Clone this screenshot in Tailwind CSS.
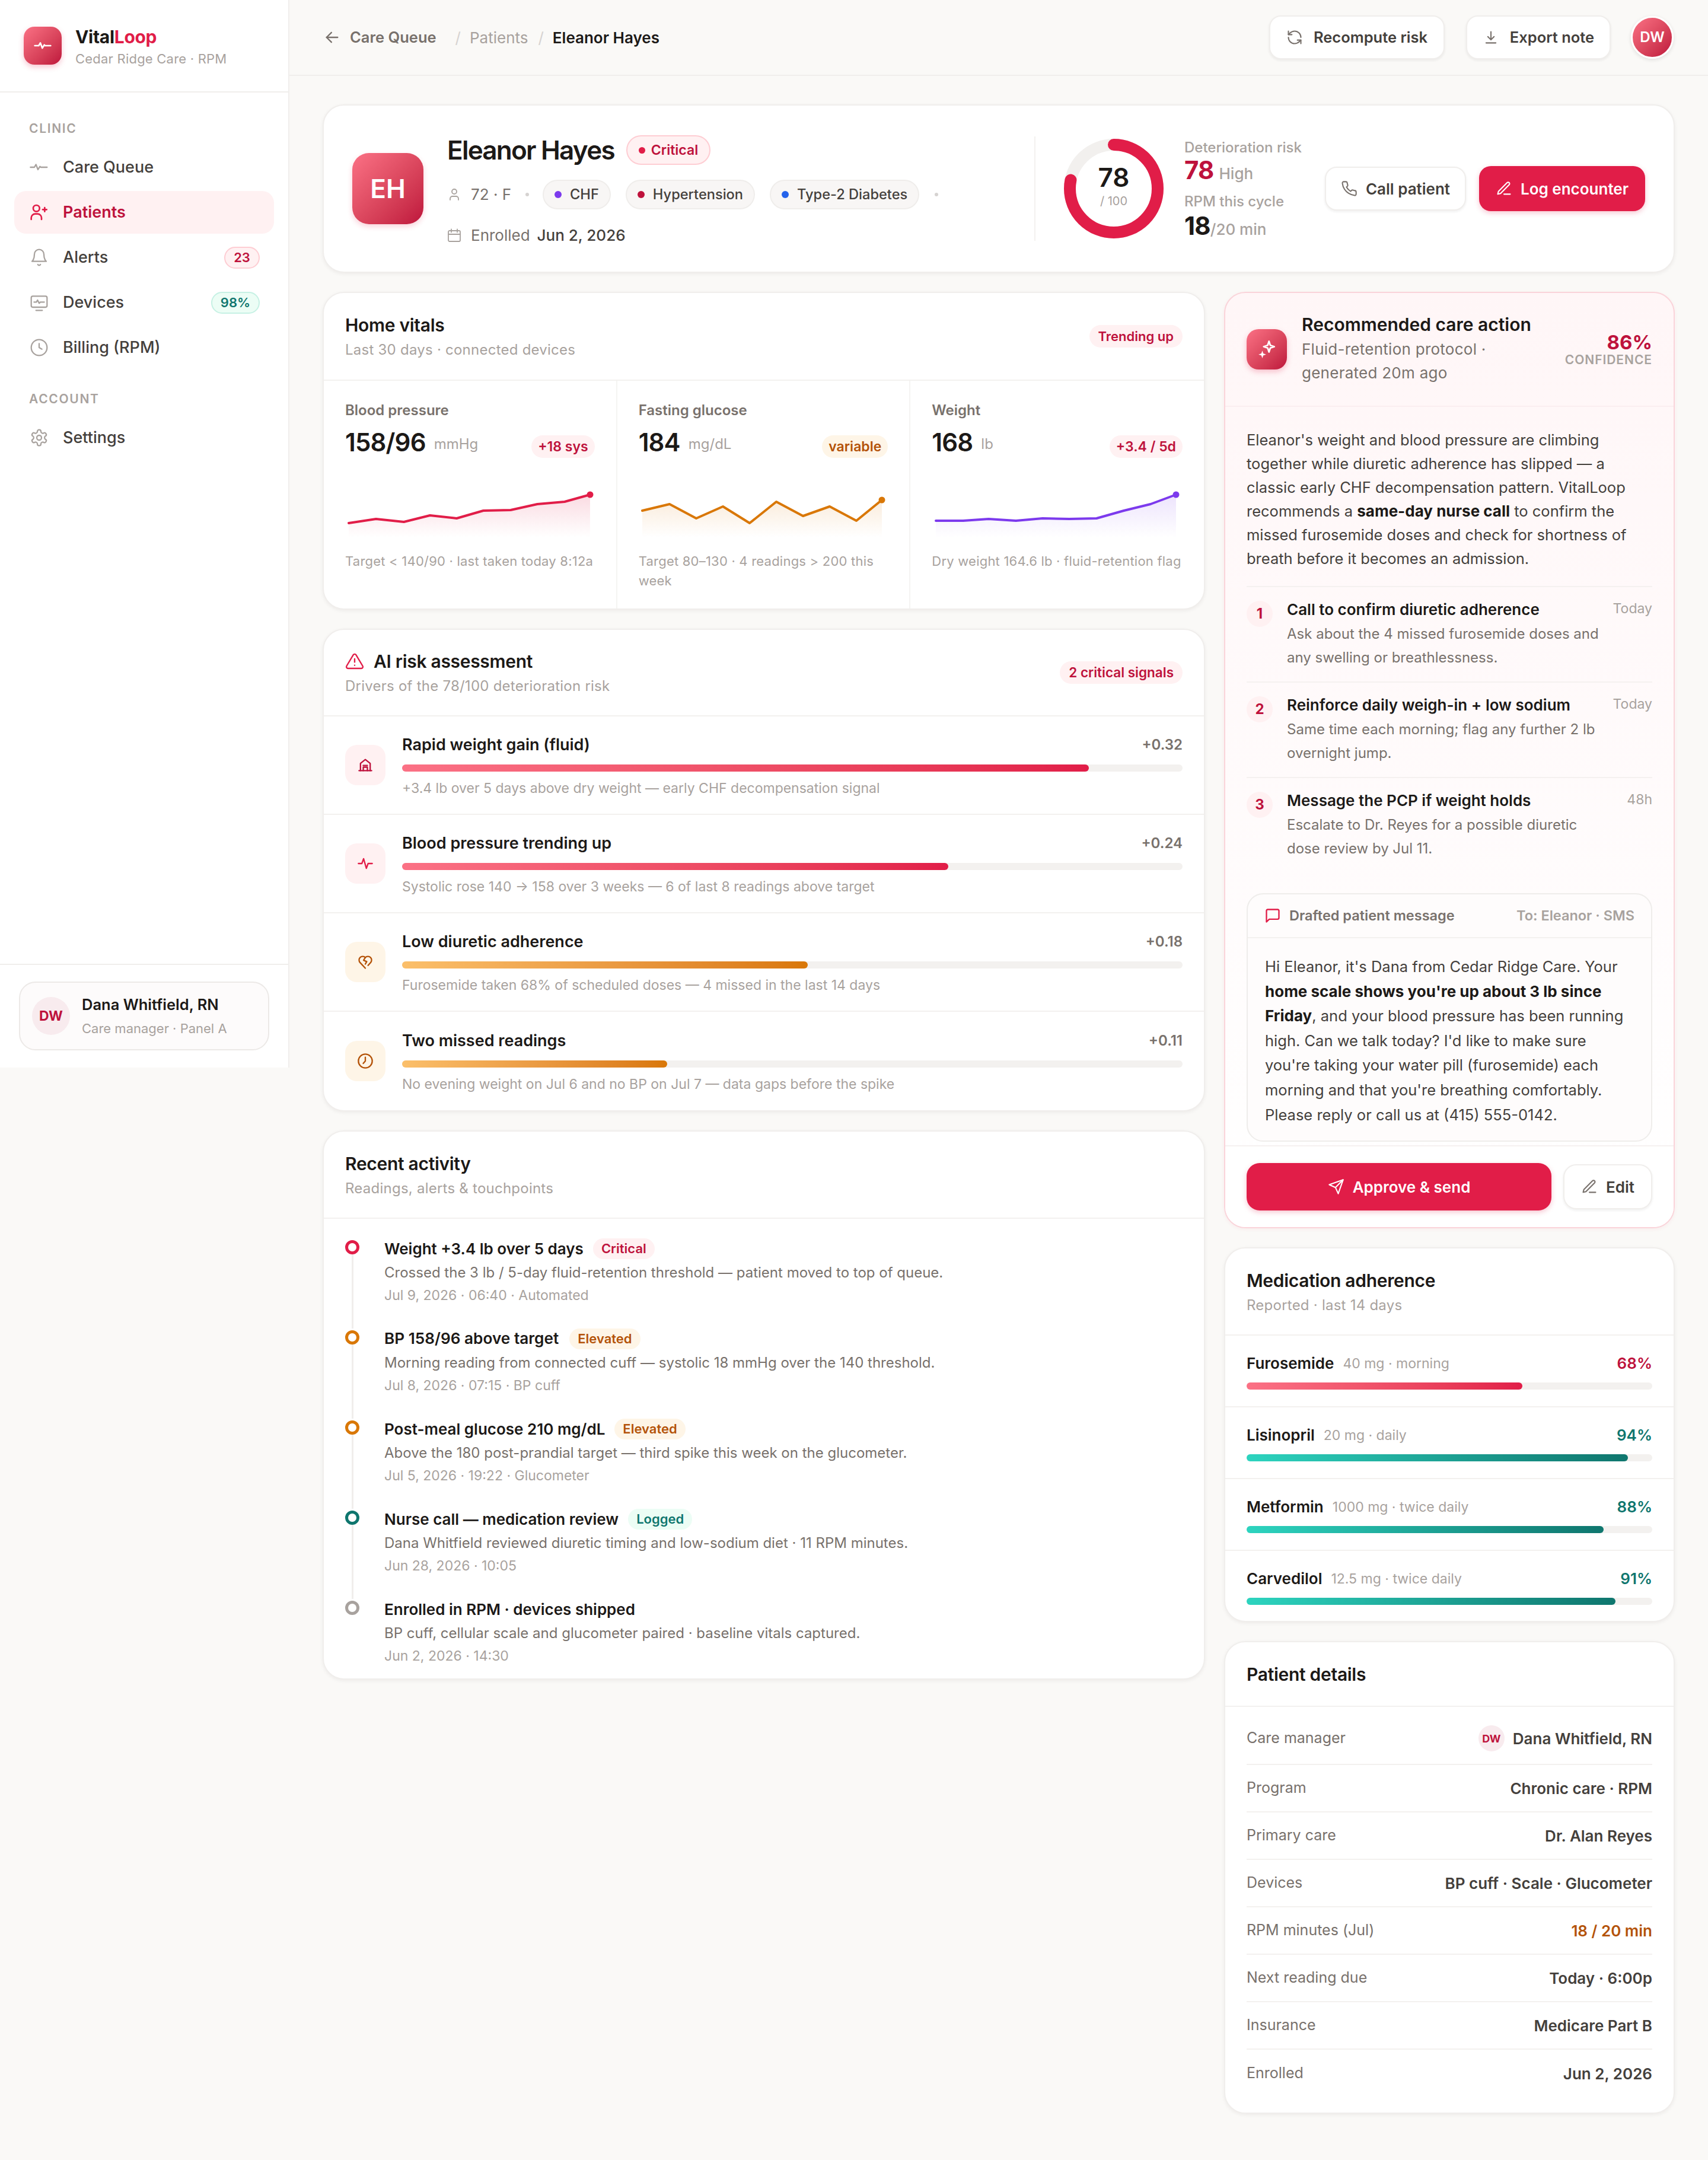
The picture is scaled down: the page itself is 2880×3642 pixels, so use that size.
<!DOCTYPE html>
<html lang="en">
<head>
    <meta charset="UTF-8">
    <title>VitalLoop - Eleanor Hayes</title>
    <script src="https://cdn.jsdelivr.net/npm/@tailwindcss/browser@4"></script>
</head>
<body class="bg-[#faf9f7] text-[#1c1917] [font-family:Inter,sans-serif]">
<div class="flex min-h-[3642px]">

    <!-- sidebar -->
    <aside class="w-[488px] h-[1800px] shrink-0 bg-white border-r-2 border-[#f0eeec] flex flex-col">
        <div class="h-[156px] shrink-0 border-b-2 border-[#f0eeec] px-10 flex items-center gap-[23px]">
            <div class="w-16 h-16 rounded-[18px] bg-linear-to-br from-[#fb7185] to-[#be123c] flex items-center justify-center shadow-[0_4px_10px_rgba(225,29,72,.25)]">
                <svg class="w-8 h-8" viewBox="0 0 24 24" fill="none" stroke="white" stroke-width="2" stroke-linecap="round" stroke-linejoin="round"><path d="M2 12h5l2-3.500 2.500 6.500 2.500-4 1 1h7"/></svg>
            </div>
            <div class="pt-[4px]">
                <div class="text-[30px] leading-[36px] font-bold tracking-[-0.01em]">Vital<span class="text-[#e11d48]">Loop</span></div>
                <div class="text-[22px] leading-[30px] mt-[4px] text-[#a8a29e] tracking-[0.01em]">Cedar Ridge Care · RPM</div>
            </div>
        </div>
        <nav class="flex-1 px-6 pt-[47px]">
            <div class="pl-[25px] text-[21px] leading-7 font-semibold tracking-[0.08em] text-[#a8a29e] mb-[15px]">CLINIC</div>
            <div class="h-[72px] mb-1 pl-[26px] pr-6 flex items-center gap-6 text-[27px] font-medium text-[#44403c]">
                <svg class="w-8 h-8 text-[#a8a29e]" viewBox="0 0 24 24" fill="none" stroke="currentColor" stroke-width="1.700" stroke-linecap="round" stroke-linejoin="round"><path d="M1 12h5l2-3.500 2.500 6.500 2.500-4 1 1h8"/></svg>
                Care Queue
            </div>
            <div class="h-[72px] mb-1 pl-[26px] pr-6 flex items-center gap-6 text-[27px] font-semibold text-[#be123c] bg-[#fff1f2] rounded-[20px]">
                <svg class="w-8 h-8 text-[#e11d48]" viewBox="0 0 24 24" fill="none" stroke="currentColor" stroke-width="2" stroke-linecap="round" stroke-linejoin="round"><path d="M2 21v-2a5 5 0 0 1 5-5h3a5 5 0 0 1 5 5v2"/><circle cx="8.500" cy="7" r="4"/><path d="M19 6v5"/><path d="M16.500 8.500h5"/></svg>
                Patients
            </div>
            <div class="h-[72px] mb-1 pl-[26px] pr-6 flex items-center gap-6 text-[27px] font-medium text-[#44403c]">
                <svg class="w-8 h-8 text-[#a8a29e]" viewBox="0 0 24 24" fill="none" stroke="currentColor" stroke-width="1.700" stroke-linecap="round" stroke-linejoin="round"><path d="M6 8a6 6 0 0 1 12 0c0 7 3 9 3 9H3s3-2 3-9"/><path d="M10.300 21a1.940 1.940 0 0 0 3.400 0"/></svg>
                Alerts
                <span class="ml-auto h-[37px] w-[60px] flex items-center justify-center rounded-full bg-[#fff1f2] border-2 border-[#fecdd3] text-[22px] font-semibold text-[#be123c]">23</span>
            </div>
            <div class="h-[72px] mb-1 pl-[26px] pr-6 flex items-center gap-6 text-[27px] font-medium text-[#44403c]">
                <svg class="w-8 h-8 text-[#a8a29e]" viewBox="0 0 24 24" fill="none" stroke="currentColor" stroke-width="1.700" stroke-linecap="round" stroke-linejoin="round"><rect x="2" y="4" width="20" height="14" rx="2"/><path d="M8 22h8"/><path d="M5.500 11.500h3l1.500-2.500 2 4 1.500-1.500h5"/></svg>
                Devices
                <span class="ml-auto h-[37px] w-[82px] flex items-center justify-center rounded-full bg-[#ecfdf5] border-2 border-[#c6f1e4] text-[22px] font-semibold text-[#0f766e]">98%</span>
            </div>
            <div class="h-[72px] mb-[37px] pl-[26px] pr-6 flex items-center gap-6 text-[27px] font-medium text-[#44403c]">
                <svg class="w-8 h-8 text-[#a8a29e]" viewBox="0 0 24 24" fill="none" stroke="currentColor" stroke-width="1.700" stroke-linecap="round" stroke-linejoin="round"><circle cx="12" cy="12" r="10"/><path d="M12 7v5l3.500 2"/></svg>
                Billing (RPM)
            </div>
            <div class="pl-[25px] text-[21px] leading-7 font-semibold tracking-[0.08em] text-[#a8a29e] mb-[15px]">ACCOUNT</div>
            <div class="h-[72px] pl-[26px] pr-6 flex items-center gap-6 text-[27px] font-medium text-[#44403c]">
                <svg class="w-8 h-8 text-[#a8a29e]" viewBox="0 0 24 24" fill="none" stroke="currentColor" stroke-width="1.700" stroke-linecap="round" stroke-linejoin="round"><path d="M12.220 2h-.44a2 2 0 0 0-2 2v.18a2 2 0 0 1-1 1.730l-.43.25a2 2 0 0 1-2 0l-.15-.08a2 2 0 0 0-2.730.73l-.22.38a2 2 0 0 0 .73 2.730l.15.1a2 2 0 0 1 1 1.720v.51a2 2 0 0 1-1 1.740l-.15.09a2 2 0 0 0-.73 2.730l.22.38a2 2 0 0 0 2.730.73l.15-.08a2 2 0 0 1 2 0l.43.25a2 2 0 0 1 1 1.730V20a2 2 0 0 0 2 2h.44a2 2 0 0 0 2-2v-.18a2 2 0 0 1 1-1.730l.43-.25a2 2 0 0 1 2 0l.15.08a2 2 0 0 0 2.730-.73l.22-.39a2 2 0 0 0-.73-2.730l-.15-.08a2 2 0 0 1-1-1.740v-.5a2 2 0 0 1 1-1.740l.15-.09a2 2 0 0 0 .73-2.730l-.22-.38a2 2 0 0 0-2.730-.73l-.15.08a2 2 0 0 1-2 0l-.43-.25a2 2 0 0 1-1-1.730V4a2 2 0 0 0-2-2z"/><circle cx="12" cy="12" r="3"/></svg>
                Settings
            </div>
        </nav>
        <div class="border-t-2 border-[#f0eeec] px-8 pt-[28px] pb-[29px]">
            <div class="h-[116px] rounded-[28px] border-2 border-[#ece9e7] bg-[#fdfbfb] pl-5 flex items-center gap-[20px]">
                <div class="w-16 h-16 rounded-full bg-[#f8ebee] flex items-center justify-center text-[23px] font-bold text-[#be123c]">DW</div>
                <div>
                    <div class="text-[25.500px] leading-[36px] font-semibold">Dana Whitfield, RN</div>
                    <div class="text-[22px] leading-[32px] mt-[6px] text-[#a8a29e]">Care manager · Panel A</div>
                </div>
            </div>
        </div>
    </aside>

    <div class="flex-1 min-w-0">
        <!-- top bar -->
        <header class="h-[128px] border-b-2 border-[#f0eeec] pl-[58px] pr-14 flex items-center">
            <svg class="w-7 h-7 text-[#78716c] mr-4" viewBox="0 0 24 24" fill="none" stroke="currentColor" stroke-width="2" stroke-linecap="round" stroke-linejoin="round"><path d="M20 12H4"/><path d="M11 5l-7 7 7 7"/></svg>
            <span class="text-[25.500px] font-semibold text-[#78716c]">Care Queue</span>
            <span class="text-[26px] text-[#d6d3d1] ml-8 mr-[15px]">/</span>
            <span class="text-[26px] text-[#a8a29e]">Patients</span>
            <span class="text-[26px] text-[#d6d3d1] ml-[17px] mr-[15px]">/</span>
            <span class="text-[26px] font-semibold">Eleanor Hayes</span>
            <button class="ml-auto w-[296px] h-[74px] rounded-[20px] bg-white border-2 border-[#f0eeec] shadow-[0_2px_4px_rgba(28,25,23,.07)] flex items-center justify-center gap-[18px] text-[25.500px] font-semibold text-[#44403c]">
                <svg class="w-7 h-7 text-[#78716c]" viewBox="0 0 24 24" fill="none" stroke="currentColor" stroke-width="1.800" stroke-linecap="round" stroke-linejoin="round"><path d="M21 12a9 9 0 0 0-9-9 9.750 9.750 0 0 0-6.740 2.740L3 8"/><path d="M3 3v5h5"/><path d="M3 12a9 9 0 0 0 9 9 9.750 9.750 0 0 0 6.740-2.740L21 16"/><path d="M16 16h5v5"/></svg>
                Recompute risk
            </button>
            <button class="ml-9 w-[244px] h-[74px] rounded-[20px] bg-white border-2 border-[#f0eeec] shadow-[0_2px_4px_rgba(28,25,23,.07)] flex items-center justify-center gap-[18px] text-[25.500px] font-semibold text-[#44403c]">
                <svg class="w-7 h-7 text-[#78716c]" viewBox="0 0 24 24" fill="none" stroke="currentColor" stroke-width="1.800" stroke-linecap="round" stroke-linejoin="round"><path d="M12 4v11"/><path d="M7.500 11l4.500 4.500 4.500-4.500"/><path d="M5 20h14"/></svg>
                Export note
            </button>
            <div class="ml-[34px] mr-[2px] w-[72px] h-[72px] rounded-full border-[3px] border-white shadow-[0_2px_6px_rgba(28,25,23,.12)] bg-linear-to-br from-[#fb7185] to-[#be123c] flex items-center justify-center text-[24px] font-semibold text-white">DW</div>
        </header>

        <main class="px-14 pt-12">
            <!-- patient hero -->
            <section class="h-[284px] bg-white border-2 border-[#f0eeec] rounded-[36px] shadow-[0_2px_6px_rgba(28,25,23,.06)] pl-[48px] pr-[48px] flex items-center">
                <div class="w-[120px] h-[120px] shrink-0 rounded-[28px] bg-linear-to-br from-[#fb7185] to-[#be123c] flex items-center justify-center text-[44px] font-semibold text-white shadow-[0_4px_10px_rgba(225,29,72,.2)] mr-[40px]">EH</div>
                <div class="flex-1 min-w-0 pt-[2px]">
                    <div class="h-[52px] flex items-center gap-5">
                        <h1 class="text-[44px] leading-[52px] font-semibold tracking-[-0.04em]">Eleanor Hayes</h1>
                        <span class="h-[50px] px-[19px] rounded-full bg-[#fff1f2] border-2 border-[#fecdd3] flex items-center gap-[10px] text-[23px] font-semibold text-[#be123c]"><i class="w-[11px] h-[11px] rounded-full bg-[#e11d48]"></i>Critical</span>
                    </div>
                    <div class="h-[50px] mt-6 flex items-center text-[26px] leading-8 text-[#78716c]">
                        <svg class="w-6 h-7 text-[#a8a29e] mr-[16px]" viewBox="0 0 24 24" fill="none" stroke="currentColor" stroke-width="1.800" stroke-linecap="round" stroke-linejoin="round"><path d="M19 21v-2a4 4 0 0 0-4-4H9a4 4 0 0 0-4 4v2"/><circle cx="12" cy="7" r="4"/></svg>
                        72 · F
                        <i class="w-[6px] h-[6px] rounded-full bg-[#d6d3d1] ml-[24px] mr-[23px]"></i>
                        <span class="h-[50px] px-[18px] rounded-full bg-[#f8f6f5] border-2 border-[#efedeb] flex items-center gap-[14px] text-[23.600px] leading-8 font-medium text-[#44403c]"><i class="w-[12px] h-[12px] rounded-full bg-[#7c3aed]"></i>CHF</span>
                        <span class="h-[50px] ml-[25px] px-[18px] rounded-full bg-[#f8f6f5] border-2 border-[#efedeb] flex items-center gap-[14px] text-[23.600px] leading-8 font-medium text-[#44403c]"><i class="w-[12px] h-[12px] rounded-full bg-[#be123c]"></i>Hypertension</span>
                        <span class="h-[50px] ml-[25px] px-[18px] rounded-full bg-[#f8f6f5] border-2 border-[#efedeb] flex items-center gap-[14px] text-[23.600px] leading-8 font-medium text-[#44403c]"><i class="w-[12px] h-[12px] rounded-full bg-[#2563eb]"></i>Type-2 Diabetes</span>
                        <i class="w-[6px] h-[6px] rounded-full bg-[#d6d3d1] ml-[26px]"></i>
                    </div>
                    <div class="h-7 mt-[30px] flex items-center text-[26px] leading-7 text-[#78716c]">
                        <svg class="w-6 h-7 text-[#a8a29e] mr-[16px]" viewBox="0 0 24 24" fill="none" stroke="currentColor" stroke-width="1.800" stroke-linecap="round" stroke-linejoin="round"><rect x="2" y="4" width="20" height="18" rx="2"/><path d="M7 1.500v5"/><path d="M17 1.500v5"/><path d="M2 10h20"/></svg>
                        Enrolled <span class="ml-3 font-medium text-[#44403c]">Jun 2, 2026</span>
                    </div>
                </div>
                <div class="w-[2px] h-[176px] bg-[#f3f1ef] mr-12"></div>
                <div class="relative w-[168px] h-[168px] mr-[35px]">
                    <svg class="w-full h-full -rotate-90" viewBox="0 0 168 168" fill="none" stroke-width="20"><circle cx="84" cy="84" r="74" stroke="#f2f0ee"/><circle cx="84" cy="84" r="74" stroke="#e11d48" stroke-linecap="round" stroke-dasharray="362.700 465"/></svg>
                    <div class="absolute inset-0 flex flex-col items-center justify-center -mt-[10px]">
                        <div class="text-[44px] leading-[50px] font-semibold">78</div>
                        <div class="text-[20px] leading-[26px] text-[#a8a29e] mt-[2px]">/ 100</div>
                    </div>
                </div>
                <div class="w-[237px] mt-[2px]">
                    <div class="text-[24px] leading-[30px] font-medium text-[#a8a29e]">Deterioration risk</div>
                    <div class="h-[46px] flex items-baseline gap-[9px]"><span class="text-[42px] leading-[46px] font-bold tracking-[-0.02em] text-[#be123c]">78</span><span class="text-[26px] font-medium text-[#a8a29e]">High</span></div>
                    <div class="text-[24px] leading-[30px] mt-[15px] font-medium text-[#a8a29e]">RPM this cycle</div>
                    <div class="h-[46px] mt-[3px] flex items-baseline"><span class="text-[42px] leading-[46px] font-bold tracking-[-0.02em]">18</span><span class="text-[26px] font-medium text-[#a8a29e]">/20 min</span></div>
                </div>
                <button class="w-[238px] h-[74px] rounded-[20px] bg-white border-2 border-[#f0eeec] shadow-[0_2px_4px_rgba(28,25,23,.07)] flex items-center justify-center gap-[14px] text-[26px] font-semibold text-[#44403c]">
                    <svg class="w-7 h-7 text-[#78716c]" viewBox="0 0 24 24" fill="none" stroke="currentColor" stroke-width="1.800" stroke-linecap="round" stroke-linejoin="round"><path d="M22 16.920v3a2 2 0 0 1-2.180 2 19.790 19.790 0 0 1-8.630-3.070 19.500 19.500 0 0 1-6-6 19.790 19.790 0 0 1-3.070-8.670A2 2 0 0 1 4.110 2h3a2 2 0 0 1 2 1.720 12.840 12.840 0 0 0 .7 2.810 2 2 0 0 1-.45 2.110L8.090 9.910a16 16 0 0 0 6 6l1.270-1.270a2 2 0 0 1 2.110-.45 12.840 12.840 0 0 0 2.810.7A2 2 0 0 1 22 16.920z"/></svg>
                    Call patient
                </button>
                <button class="ml-[22px] w-[280px] h-[76px] rounded-[20px] bg-[#e11d48] shadow-[0_3px_8px_rgba(225,29,72,.25)] flex items-center justify-center gap-[14px] text-[26px] font-semibold text-white">
                    <svg class="w-7 h-7" viewBox="0 0 24 24" fill="none" stroke="currentColor" stroke-width="1.800" stroke-linecap="round" stroke-linejoin="round"><path d="M12 20h9"/><path d="M16.500 3.500a2.121 2.121 0 0 1 3 3L7 19l-4 1 1-4L16.500 3.500z"/></svg>
                    Log encounter
                </button>
            </section>

            <div class="mt-8 grid grid-cols-[1fr_760px] gap-8 items-start">
                <!-- left column -->
                <div class="flex flex-col gap-8 min-w-0">
                    <section class="bg-white border-2 border-[#f0eeec] rounded-[36px] shadow-[0_2px_6px_rgba(28,25,23,.06)] overflow-hidden">
                        <div class="h-[148px] border-b-2 border-[#f3f1ef] px-9 flex items-center justify-between">
                            <div>
                                <h2 class="text-[30px] leading-[40px] font-semibold tracking-[-0.01em]">Home vitals</h2>
                                <p class="text-[24px] leading-[32px] mt-[6px] text-[#a8a29e] tracking-[0.01em]">Last 30 days · connected devices</p>
                            </div>
                            <span class="h-[38px] px-[15px] rounded-full bg-[#fff1f2] flex items-center text-[22px] font-semibold text-[#be123c]">Trending up</span>
                        </div>
                        <div class="grid grid-cols-3 h-[384px]">
                            <div class="border-r-2 border-[#f5f4f2] px-9 pt-9">
                                <div class="text-[24px] leading-7 font-semibold text-[#78716c]">Blood pressure</div>
                                <div class="mt-[14px] h-[52px] flex items-center">
                                    <span class="text-[42px] leading-[52px] font-semibold tracking-[-0.02em]">158/96</span>
                                    <span class="ml-[14px] mt-[6px] text-[24px] leading-8 text-[#a8a29e]">mmHg</span>
                                    <span class="ml-auto h-[38px] px-[11px] mt-[14px] rounded-full bg-[#fff1f2] flex items-center text-[23px] leading-8 font-semibold text-[#be123c]">+18 sys</span>
                                </div>
                                <svg class="block w-[421px] h-[84px] mt-[54px]" viewBox="0 0 421 84" fill="none"><defs><linearGradient id="g1" x1="0" y1="0" x2="0" y2="1"><stop offset="0" stop-color="#e11d48" stop-opacity=".16"/><stop offset="1" stop-color="#e11d48" stop-opacity="0"/></linearGradient></defs><path d="M6 56L52 49 99 54 143 43 188 48 233 35 279 34 324 24 370 20 413 8V80H6Z" fill="url(#g1)"/><path d="M6 56L52 49 99 54 143 43 188 48 233 35 279 34 324 24 370 20 413 8" stroke="#e11d48" stroke-width="4" stroke-linecap="round" stroke-linejoin="round"/><circle cx="413" cy="8" r="5.500" fill="#e11d48"/></svg>
                                <p class="mt-5 text-[22px] leading-[33px] text-[#a8a29e] tracking-[0.01em]">Target &lt; 140/90 · last taken today 8:12a</p>
                            </div>
                            <div class="border-r-2 border-[#f5f4f2] px-9 pt-9">
                                <div class="text-[24px] leading-7 font-semibold text-[#78716c]">Fasting glucose</div>
                                <div class="mt-[14px] h-[52px] flex items-center">
                                    <span class="text-[42px] leading-[52px] font-semibold tracking-[-0.02em]">184</span>
                                    <span class="ml-[14px] mt-[6px] text-[24px] leading-8 text-[#a8a29e]">mg/dL</span>
                                    <span class="ml-auto h-[38px] px-[11px] mt-[14px] rounded-full bg-[#fef5e7] flex items-center text-[23px] leading-8 font-semibold text-[#b45309]">variable</span>
                                </div>
                                <svg class="block w-[421px] h-[84px] mt-[54px]" viewBox="0 0 421 84" fill="none"><defs><linearGradient id="g2" x1="0" y1="0" x2="0" y2="1"><stop offset="0" stop-color="#d97706" stop-opacity=".14"/><stop offset="1" stop-color="#d97706" stop-opacity="0"/></linearGradient></defs><path d="M6 35L52 24 97 48 142 28 187 56 232 20 277 44 322 28 367 52 410 17V80H6Z" fill="url(#g2)"/><path d="M6 35L52 24 97 48 142 28 187 56 232 20 277 44 322 28 367 52 410 17" stroke="#d97706" stroke-width="4" stroke-linecap="round" stroke-linejoin="round"/><circle cx="410" cy="17" r="5.500" fill="#d97706"/></svg>
                                <p class="mt-5 text-[22px] leading-[33px] text-[#a8a29e] tracking-[0.01em]">Target 80–130 · 4 readings &gt; 200 this week</p>
                            </div>
                            <div class="px-9 pt-9">
                                <div class="text-[24px] leading-7 font-semibold text-[#78716c]">Weight</div>
                                <div class="mt-[14px] h-[52px] flex items-center">
                                    <span class="text-[42px] leading-[52px] font-semibold tracking-[-0.02em]">168</span>
                                    <span class="ml-[14px] mt-[6px] text-[24px] leading-8 text-[#a8a29e]">lb</span>
                                    <span class="ml-auto h-[38px] px-[11px] mt-[14px] rounded-full bg-[#fff1f2] flex items-center text-[23px] leading-8 font-semibold text-[#be123c]">+3.4 / 5d</span>
                                </div>
                                <svg class="block w-[421px] h-[84px] mt-[54px]" viewBox="0 0 421 84" fill="none"><defs><linearGradient id="g3" x1="0" y1="0" x2="0" y2="1"><stop offset="0" stop-color="#7c3aed" stop-opacity=".14"/><stop offset="1" stop-color="#7c3aed" stop-opacity="0"/></linearGradient></defs><path d="M7 52L53 52 96 49 142 52 187 48 232 49 278 48 324 35 369 24 412 8V80H7Z" fill="url(#g3)"/><path d="M7 52L53 52 96 49 142 52 187 48 232 49 278 48 324 35 369 24 412 8" stroke="#7c3aed" stroke-width="4" stroke-linecap="round" stroke-linejoin="round"/><circle cx="412" cy="8" r="5.500" fill="#7c3aed"/></svg>
                                <p class="mt-5 text-[22px] leading-[33px] text-[#a8a29e] tracking-[0.01em] whitespace-nowrap">Dry weight 164.6 lb · fluid-retention flag</p>
                            </div>
                        </div>
                    </section>

                    <section class="bg-white border-2 border-[#f0eeec] rounded-[36px] shadow-[0_2px_6px_rgba(28,25,23,.06)] overflow-hidden">
                        <div class="h-[146px] border-b-2 border-[#f3f1ef] px-9 flex items-center justify-between">
                            <div>
                                <h2 class="text-[30px] leading-[40px] font-semibold tracking-[-0.01em] flex items-center gap-4">
                                    <svg class="w-8 h-8 text-[#e11d48]" viewBox="0 0 24 24" fill="none" stroke="currentColor" stroke-width="1.800" stroke-linecap="round" stroke-linejoin="round"><path d="M10.290 3.860 1.820 18a2 2 0 0 0 1.710 3h16.940a2 2 0 0 0 1.710-3L13.710 3.860a2 2 0 0 0-3.420 0z"/><path d="M12 9v4"/><path d="M12 17h.01"/></svg>
                                    AI risk assessment
                                </h2>
                                <p class="text-[24px] leading-[32px] mt-[6px] text-[#a8a29e] tracking-[0.01em]">Drivers of the 78/100 deterioration risk</p>
                            </div>
                            <span class="h-[38px] px-[15px] rounded-full bg-[#fff1f2] flex items-center text-[22.500px] font-semibold text-[#be123c]">2 critical signals</span>
                        </div>
                        <div class="border-b-2 border-[#f3f1ef] px-9 pt-[31px] pb-[27px] flex items-center gap-[28px]">
                            <div class="w-[68px] h-[68px] shrink-0 -mt-1 rounded-[20px] bg-[#fff1f2] flex items-center justify-center text-[#be123c]">
                                <svg class="w-7 h-7" viewBox="0 0 24 24" fill="none" stroke="currentColor" stroke-width="2" stroke-linecap="round" stroke-linejoin="round"><path d="M5 20V9.500L12 4l7 5.500V20"/><path d="M3 20h18"/><path d="M9 20v-5h6v5"/><path d="M9 12.500h6"/></svg>
                            </div>
                            <div class="flex-1 min-w-0">
                                <div class="flex items-center justify-between h-[34px]"><span class="text-[27px] font-semibold">Rapid weight gain (fluid)</span><span class="text-[24px] font-semibold text-[#78716c]">+0.32</span></div>
                                <div class="mt-4 h-3 rounded-full bg-[#f3f1ef]"><div class="h-full rounded-full bg-linear-to-r from-[#fb7185] to-[#e11d48]" style="width:88%"></div></div>
                                <p class="mt-3 text-[23px] leading-8 text-[#a8a29e]">+3.4 lb over 5 days above dry weight — early CHF decompensation signal</p>
                            </div>
                        </div>
                        <div class="border-b-2 border-[#f3f1ef] px-9 pt-[31px] pb-[27px] flex items-center gap-[28px]">
                            <div class="w-[68px] h-[68px] shrink-0 -mt-1 rounded-[20px] bg-[#fff1f2] flex items-center justify-center text-[#be123c]">
                                <svg class="w-7 h-7" viewBox="0 0 24 24" fill="none" stroke="#e11d48" stroke-width="2" stroke-linecap="round" stroke-linejoin="round"><path d="M2 12h5l2.500-7 4 14 2.500-7h6"/></svg>
                            </div>
                            <div class="flex-1 min-w-0">
                                <div class="flex items-center justify-between h-[34px]"><span class="text-[27px] font-semibold">Blood pressure trending up</span><span class="text-[24px] font-semibold text-[#78716c]">+0.24</span></div>
                                <div class="mt-4 h-3 rounded-full bg-[#f3f1ef]"><div class="h-full rounded-full bg-linear-to-r from-[#fb7185] to-[#e11d48]" style="width:70%"></div></div>
                                <p class="mt-3 text-[23px] leading-8 text-[#a8a29e]">Systolic rose 140 → 158 over 3 weeks — 6 of last 8 readings above target</p>
                            </div>
                        </div>
                        <div class="border-b-2 border-[#f3f1ef] px-9 pt-[31px] pb-[27px] flex items-center gap-[28px]">
                            <div class="w-[68px] h-[68px] shrink-0 -mt-1 rounded-[20px] bg-[#fef5e7] flex items-center justify-center text-[#b45309]">
                                <svg class="w-7 h-7" viewBox="0 0 24 24" fill="none" stroke="currentColor" stroke-width="2" stroke-linecap="round" stroke-linejoin="round"><path d="M12 21 4.500 13a5.200 5.200 0 0 1 7.500-7.500A5.200 5.200 0 0 1 19.500 13L16 17"/><path d="M12 5.500 9.500 9.500l4.500 2-2 3.500"/></svg>
                            </div>
                            <div class="flex-1 min-w-0">
                                <div class="flex items-center justify-between h-[34px]"><span class="text-[27px] font-semibold">Low diuretic adherence</span><span class="text-[24px] font-semibold text-[#78716c]">+0.18</span></div>
                                <div class="mt-4 h-3 rounded-full bg-[#f3f1ef]"><div class="h-full rounded-full bg-linear-to-r from-[#fbbf6a] to-[#d97706]" style="width:52%"></div></div>
                                <p class="mt-3 text-[23px] leading-8 text-[#a8a29e]">Furosemide taken 68% of scheduled doses — 4 missed in the last 14 days</p>
                            </div>
                        </div>
                        <div class="px-9 pt-[32px] pb-[28px] flex items-center gap-[28px]">
                            <div class="w-[68px] h-[68px] shrink-0 -mt-1 rounded-[20px] bg-[#fef5e7] flex items-center justify-center text-[#b45309]">
                                <svg class="w-7 h-7" viewBox="0 0 24 24" fill="none" stroke="currentColor" stroke-width="2" stroke-linecap="round" stroke-linejoin="round"><circle cx="12" cy="12" r="10"/><path d="M12 6.500V12l-3 3.500"/></svg>
                            </div>
                            <div class="flex-1 min-w-0">
                                <div class="flex items-center justify-between h-[34px]"><span class="text-[27px] font-semibold">Two missed readings</span><span class="text-[24px] font-semibold text-[#78716c]">+0.11</span></div>
                                <div class="mt-4 h-3 rounded-full bg-[#f3f1ef]"><div class="h-full rounded-full bg-linear-to-r from-[#fbbf6a] to-[#d97706]" style="width:34%"></div></div>
                                <p class="mt-3 text-[23px] leading-8 text-[#a8a29e]">No evening weight on Jul 6 and no BP on Jul 7 — data gaps before the spike</p>
                            </div>
                        </div>
                    </section>

                    <section class="bg-white border-2 border-[#f0eeec] rounded-[36px] shadow-[0_2px_6px_rgba(28,25,23,.06)] overflow-hidden">
                        <div class="h-[147px] border-b-2 border-[#f3f1ef] px-9 flex items-center">
                            <div>
                                <h2 class="text-[30px] leading-[40px] font-semibold tracking-[-0.01em]">Recent activity</h2>
                                <p class="text-[24px] leading-[32px] mt-[6px] text-[#a8a29e] tracking-[0.01em]">Readings, alerts &amp; touchpoints</p>
                            </div>
                        </div>
                        <div class="px-9 pt-[33px] pb-[22px]">
                            <div class="flex gap-[42px]">
                                <div class="w-6 shrink-0 flex flex-col items-center pt-[3px]"><i class="w-6 h-6 shrink-0 rounded-full border-[5px] border-[#e11d48] bg-white"></i><i class="flex-1 w-[3px] bg-[#f0eeec]"></i></div>
                                <div class="pb-10">
                                    <div class="h-[34px] flex items-center gap-4"><span class="text-[26px] font-semibold">Weight +3.4 lb over 5 days</span><span class="h-[35px] px-[14px] rounded-full bg-[#fff1f2] flex items-center text-[22px] leading-8 font-semibold text-[#be123c]">Critical</span></div>
                                    <p class="mt-[6px] text-[24px] leading-9 text-[#78716c]">Crossed the 3 lb / 5-day fluid-retention threshold — patient moved to top of queue.</p>
                                    <p class="mt-1 text-[23px] leading-8 text-[#a8a29e]">Jul 9, 2026 · 06:40 · Automated</p>
                                </div>
                            </div>
                            <div class="flex gap-[42px]">
                                <div class="w-6 shrink-0 flex flex-col items-center pt-[3px]"><i class="w-6 h-6 shrink-0 rounded-full border-[5px] border-[#d97706] bg-white"></i><i class="flex-1 w-[3px] bg-[#f0eeec]"></i></div>
                                <div class="pb-10">
                                    <div class="h-[34px] flex items-center gap-[18px]"><span class="text-[26.200px] font-semibold">BP 158/96 above target</span><span class="h-[35px] px-[14px] rounded-full bg-[#fef5e7] flex items-center text-[22px] leading-8 font-semibold text-[#b45309]">Elevated</span></div>
                                    <p class="mt-[6px] text-[24px] leading-9 text-[#78716c]">Morning reading from connected cuff — systolic 18 mmHg over the 140 threshold.</p>
                                    <p class="mt-1 text-[23px] leading-8 text-[#a8a29e]">Jul 8, 2026 · 07:15 · BP cuff</p>
                                </div>
                            </div>
                            <div class="flex gap-[42px]">
                                <div class="w-6 shrink-0 flex flex-col items-center pt-[3px]"><i class="w-6 h-6 shrink-0 rounded-full border-[5px] border-[#d97706] bg-white"></i><i class="flex-1 w-[3px] bg-[#f0eeec]"></i></div>
                                <div class="pb-10">
                                    <div class="h-[34px] flex items-center gap-4"><span class="text-[26px] font-semibold">Post-meal glucose 210 mg/dL</span><span class="h-[35px] px-[14px] rounded-full bg-[#fef5e7] flex items-center text-[22px] leading-8 font-semibold text-[#b45309]">Elevated</span></div>
                                    <p class="mt-[6px] text-[24px] leading-9 text-[#78716c]">Above the 180 post-prandial target — third spike this week on the glucometer.</p>
                                    <p class="mt-1 text-[23px] leading-8 text-[#a8a29e]">Jul 5, 2026 · 19:22 · Glucometer</p>
                                </div>
                            </div>
                            <div class="flex gap-[42px]">
                                <div class="w-6 shrink-0 flex flex-col items-center pt-[3px]"><i class="w-6 h-6 shrink-0 rounded-full border-[5px] border-[#0f766e] bg-white"></i><i class="flex-1 w-[3px] bg-[#f0eeec]"></i></div>
                                <div class="pb-10">
                                    <div class="h-[34px] flex items-center gap-4"><span class="text-[26px] font-semibold">Nurse call — medication review</span><span class="h-[35px] px-[14px] rounded-full bg-[#ecfdf5] flex items-center text-[22px] leading-8 font-semibold text-[#0f766e]">Logged</span></div>
                                    <p class="mt-[6px] text-[24px] leading-9 text-[#78716c]">Dana Whitfield reviewed diuretic timing and low-sodium diet · 11 RPM minutes.</p>
                                    <p class="mt-1 text-[23px] leading-8 text-[#a8a29e]">Jun 28, 2026 · 10:05</p>
                                </div>
                            </div>
                            <div class="flex gap-[42px]">
                                <div class="w-6 shrink-0 flex flex-col items-center pt-[3px]"><i class="w-6 h-6 shrink-0 rounded-full border-[5px] border-[#a8a29e] bg-white"></i></div>
                                <div>
                                    <div class="h-[34px] flex items-center gap-4"><span class="text-[26px] font-semibold">Enrolled in RPM · devices shipped</span></div>
                                    <p class="mt-[6px] text-[24px] leading-9 text-[#78716c]">BP cuff, cellular scale and glucometer paired · baseline vitals captured.</p>
                                    <p class="mt-1 text-[23px] leading-8 text-[#a8a29e]">Jun 2, 2026 · 14:30</p>
                                </div>
                            </div>
                        </div>
                    </section>
                </div>

                <!-- right column -->
                <div class="flex flex-col gap-8 min-w-0">
                    <section class="bg-linear-to-b from-[#fff6f7] to-white border-2 border-[#fad4da] rounded-[36px] shadow-[0_2px_6px_rgba(225,29,72,.06)] overflow-hidden">
                        <div class="h-[192px] border-b-2 border-[#fbeef0] px-9 flex items-center">
                            <div class="w-[68px] h-[68px] shrink-0 rounded-[20px] bg-linear-to-br from-[#fb7185] to-[#be123c] shadow-[0_4px_10px_rgba(225,29,72,.25)] flex items-center justify-center">
                                <svg class="w-9 h-9" viewBox="0 0 24 24"><path d="M14.500 3l1.500 4.500 4.500 1.500-4.500 1.500-1.500 4.500-1.500-4.500-4.500-1.500 4.500-1.500z" fill="none" stroke="white" stroke-width="1.800" stroke-linejoin="round"/><path d="M7 13.500l1.100 3.200 3.200 1.100-3.200 1.100L7 22l-1.100-3.100-3.200-1.100 3.200-1.100z" fill="white"/></svg>
                            </div>
                            <div class="ml-[25px] w-[416px]">
                                <h2 class="text-[30px] leading-[36px] mb-1 font-semibold">Recommended care action</h2>
                                <p class="text-[26px] leading-[40px] text-[#78716c] tracking-[0.01em]">Fluid-retention protocol · generated 20m ago</p>
                            </div>
                            <div class="ml-auto text-right">
                                <div class="text-[33px] leading-[36px] font-bold text-[#be123c]">86%</div>
                                <div class="text-[21px] leading-[24px] font-semibold tracking-[0.045em] text-[#a8a29e]">CONFIDENCE</div>
                            </div>
                        </div>
                        <div class="px-9 pt-9">
                            <p class="text-[25.500px] leading-[40px] text-[#44403c]">Eleanor's weight and blood pressure are climbing together while diuretic adherence has slipped — a classic early CHF decompensation pattern. VitalLoop recommends a <b class="text-[26px] font-bold text-[#1c1917]">same-day nurse call</b> to confirm the missed furosemide doses and check for shortness of breath before it becomes an admission.</p>
                            <div class="mt-[26px] border-t-2 border-[#f5f1f0] pt-5 pb-5 flex h-[161px]">
                                <div class="w-11 h-11 shrink-0 mt-[3px] rounded-full bg-[#fff1f2] flex items-center justify-center text-[24px] font-bold text-[#be123c]">1</div>
                                <div class="ml-[24px] flex-1 min-w-0">
                                    <div class="text-[26px] leading-9 font-semibold">Call to confirm diuretic adherence</div>
                                    <p class="text-[24px] leading-[40px] mt-[3px] text-[#78716c] w-[530px]">Ask about the 4 missed furosemide doses and any swelling or breathlessness.</p>
                                </div>
                                <div class="text-[23px] leading-8 text-[#a8a29e]">Today</div>
                            </div>
                            <div class="border-t-2 border-[#f5f1f0] pt-5 pb-5 flex h-[161px]">
                                <div class="w-11 h-11 shrink-0 mt-[3px] rounded-full bg-[#fff1f2] flex items-center justify-center text-[24px] font-bold text-[#be123c]">2</div>
                                <div class="ml-[24px] flex-1 min-w-0">
                                    <div class="text-[26px] leading-9 font-semibold">Reinforce daily weigh-in + low sodium</div>
                                    <p class="text-[24px] leading-[40px] mt-[3px] text-[#78716c] w-[530px]">Same time each morning; flag any further 2 lb overnight jump.</p>
                                </div>
                                <div class="text-[23px] leading-8 text-[#a8a29e]">Today</div>
                            </div>
                            <div class="border-t-2 border-[#f5f1f0] pt-5 pb-5 flex h-[160px]">
                                <div class="w-11 h-11 shrink-0 mt-[3px] rounded-full bg-[#fff1f2] flex items-center justify-center text-[24px] font-bold text-[#be123c]">3</div>
                                <div class="ml-[24px] flex-1 min-w-0">
                                    <div class="text-[26px] leading-9 font-semibold">Message the PCP if weight holds</div>
                                    <p class="text-[24px] leading-[40px] mt-[3px] text-[#78716c] w-[530px]">Escalate to Dr. Reyes for a possible diuretic dose review by Jul 11.</p>
                                </div>
                                <div class="text-[23px] leading-8 text-[#a8a29e]">48h</div>
                            </div>
                            <div class="mt-[36px] rounded-[28px] border-2 border-[#efedeb] bg-[#fefcfc]">
                                <div class="h-[74px] border-b-2 border-[#f3f1ef] px-7 flex items-center text-[23.500px] font-semibold">
                                    <svg class="w-7 h-7 text-[#e11d48] mr-[14px]" viewBox="0 0 24 24" fill="none" stroke="currentColor" stroke-width="2" stroke-linecap="round" stroke-linejoin="round"><path d="M21 15a2 2 0 0 1-2 2H7l-4 4V5a2 2 0 0 1 2-2h14a2 2 0 0 1 2 2z"/></svg>
                                    <span class="text-[#78716c]">Drafted patient message</span>
                                    <span class="ml-auto text-[#a8a29e]">To: Eleanor · SMS</span>
                                </div>
                                <p class="px-[29px] pt-[27px] pb-[23px] text-[25.500px] leading-[41.600px] text-[#44403c]">Hi Eleanor, it's Dana from Cedar Ridge Care. Your <b class="text-[26px] font-bold text-[#1c1917]">home scale shows you're up about 3 lb since Friday</b>, and your blood pressure has been running high. Can we talk today? I'd like to make sure you're taking your water pill (furosemide) each morning and that you're breathing comfortably. Please reply or call us at (415) 555-0142.</p>
                            </div>
                        </div>
                        <div class="mt-[6px] border-t-2 border-[#f5f1f0] bg-white px-9 pt-7 pb-7 flex items-center gap-5">
                            <button class="flex-1 h-20 rounded-[22px] bg-[#e11d48] shadow-[0_3px_8px_rgba(225,29,72,.25)] flex items-center justify-center gap-[14px] text-[26px] font-semibold text-white">
                                <svg class="w-7 h-7" viewBox="0 0 24 24" fill="none" stroke="currentColor" stroke-width="1.800" stroke-linecap="round" stroke-linejoin="round"><path d="M22 2 11 13"/><path d="M22 2l-7 20-4-9-9-4 20-7z"/></svg>
                                Approve &amp; send
                            </button>
                            <button class="w-[150px] h-[76px] rounded-[22px] bg-white border-2 border-[#f0eeec] shadow-[0_2px_4px_rgba(28,25,23,.07)] flex items-center justify-center gap-[14px] text-[26px] font-semibold text-[#44403c]">
                                <svg class="w-7 h-7 text-[#78716c]" viewBox="0 0 24 24" fill="none" stroke="currentColor" stroke-width="1.800" stroke-linecap="round" stroke-linejoin="round"><path d="M12 20h9"/><path d="M16.500 3.500a2.121 2.121 0 0 1 3 3L7 19l-4 1 1-4L16.500 3.500z"/></svg>
                                Edit
                            </button>
                        </div>
                    </section>

                    <section class="bg-white border-2 border-[#f0eeec] rounded-[36px] shadow-[0_2px_6px_rgba(28,25,23,.06)] overflow-hidden">
                        <div class="h-[147px] border-b-2 border-[#f3f1ef] px-9 flex items-center">
                            <div>
                                <h2 class="text-[30px] leading-[40px] font-semibold tracking-[-0.01em]">Medication adherence</h2>
                                <p class="text-[24px] leading-[32px] mt-[6px] text-[#a8a29e] tracking-[0.01em]">Reported · last 14 days</p>
                            </div>
                        </div>
                        <div class="h-[121px] border-b-2 border-[#f3f1ef] px-9 pt-7">
                            <div class="h-9 flex items-center"><span class="text-[26px] font-semibold">Furosemide</span><span class="ml-[15px] text-[23px] text-[#a8a29e] mt-[2px]">40 mg · morning</span><span class="ml-auto text-[26px] font-semibold text-[#be123c]">68%</span></div>
                            <div class="mt-[15px] h-3 rounded-full bg-[#f3f1ef]"><div class="h-full rounded-full bg-linear-to-r from-[#fb7185] to-[#e11d48]" style="width:68%"></div></div>
                        </div>
                        <div class="h-[121px] border-b-2 border-[#f3f1ef] px-9 pt-7">
                            <div class="h-9 flex items-center"><span class="text-[26px] font-semibold">Lisinopril</span><span class="ml-[15px] text-[23px] text-[#a8a29e] mt-[2px]">20 mg · daily</span><span class="ml-auto text-[26px] font-semibold text-[#0f766e]">94%</span></div>
                            <div class="mt-[15px] h-3 rounded-full bg-[#f3f1ef]"><div class="h-full rounded-full bg-linear-to-r from-[#2dd4bf] to-[#0f766e]" style="width:94%"></div></div>
                        </div>
                        <div class="h-[121px] border-b-2 border-[#f3f1ef] px-9 pt-7">
                            <div class="h-9 flex items-center"><span class="text-[26px] font-semibold">Metformin</span><span class="ml-[15px] text-[23px] text-[#a8a29e] mt-[2px]">1000 mg · twice daily</span><span class="ml-auto text-[26px] font-semibold text-[#0f766e]">88%</span></div>
                            <div class="mt-[15px] h-3 rounded-full bg-[#f3f1ef]"><div class="h-full rounded-full bg-linear-to-r from-[#2dd4bf] to-[#0f766e]" style="width:88%"></div></div>
                        </div>
                        <div class="h-[118px] px-9 pt-7">
                            <div class="h-9 flex items-center"><span class="text-[26px] font-semibold">Carvedilol</span><span class="ml-[15px] text-[23px] text-[#a8a29e] mt-[2px]">12.5 mg · twice daily</span><span class="ml-auto text-[26px] font-semibold text-[#0f766e]">91%</span></div>
                            <div class="mt-[15px] h-3 rounded-full bg-[#f3f1ef]"><div class="h-full rounded-full bg-linear-to-r from-[#2dd4bf] to-[#0f766e]" style="width:91%"></div></div>
                        </div>
                    </section>

                    <section class="bg-white border-2 border-[#f0eeec] rounded-[36px] shadow-[0_2px_6px_rgba(28,25,23,.06)] overflow-hidden">
                        <div class="h-[109px] border-b-2 border-[#f3f1ef] px-9 flex items-center">
                            <h2 class="text-[30px] leading-[40px] font-semibold tracking-[-0.01em]">Patient details</h2>
                        </div>
                        <div class="px-9 pb-[26px] text-[25px]">
                            <div class="h-[98px] pt-[10px] border-b-2 border-[#f3f1ef] flex items-center justify-between"><span class="text-[#78716c]">Care manager</span><span class="flex items-center gap-[14px] text-[26px] font-semibold text-[#44403c]"><i class="not-italic w-11 h-11 rounded-full bg-[#f8ebee] flex items-center justify-center text-[18px] font-bold text-[#be123c]">DW</i>Dana Whitfield, RN</span></div>
                            <div class="h-20 border-b-2 border-[#f3f1ef] flex items-center justify-between"><span class="text-[#78716c]">Program</span><span class="text-[26px] font-semibold text-[#44403c]">Chronic care · RPM</span></div>
                            <div class="h-20 border-b-2 border-[#f3f1ef] flex items-center justify-between"><span class="text-[#78716c]">Primary care</span><span class="text-[26px] font-semibold text-[#44403c]">Dr. Alan Reyes</span></div>
                            <div class="h-20 border-b-2 border-[#f3f1ef] flex items-center justify-between"><span class="text-[#78716c]">Devices</span><span class="text-[26px] font-semibold text-[#44403c]">BP cuff · Scale · Glucometer</span></div>
                            <div class="h-20 border-b-2 border-[#f3f1ef] flex items-center justify-between"><span class="text-[#78716c]">RPM minutes (Jul)</span><span class="text-[26px] font-semibold text-[#b45309]">18 / 20 min</span></div>
                            <div class="h-20 border-b-2 border-[#f3f1ef] flex items-center justify-between"><span class="text-[#78716c]">Next reading due</span><span class="text-[26px] font-semibold text-[#44403c]">Today · 6:00p</span></div>
                            <div class="h-20 border-b-2 border-[#f3f1ef] flex items-center justify-between"><span class="text-[#78716c]">Insurance</span><span class="text-[26px] font-semibold text-[#44403c]">Medicare Part B</span></div>
                            <div class="h-20 flex items-center justify-between"><span class="text-[#78716c]">Enrolled</span><span class="text-[26px] font-semibold text-[#44403c]">Jun 2, 2026</span></div>
                        </div>
                    </section>
                </div>
            </div>
        </main>
    </div>
</div>
</body>
</html>
